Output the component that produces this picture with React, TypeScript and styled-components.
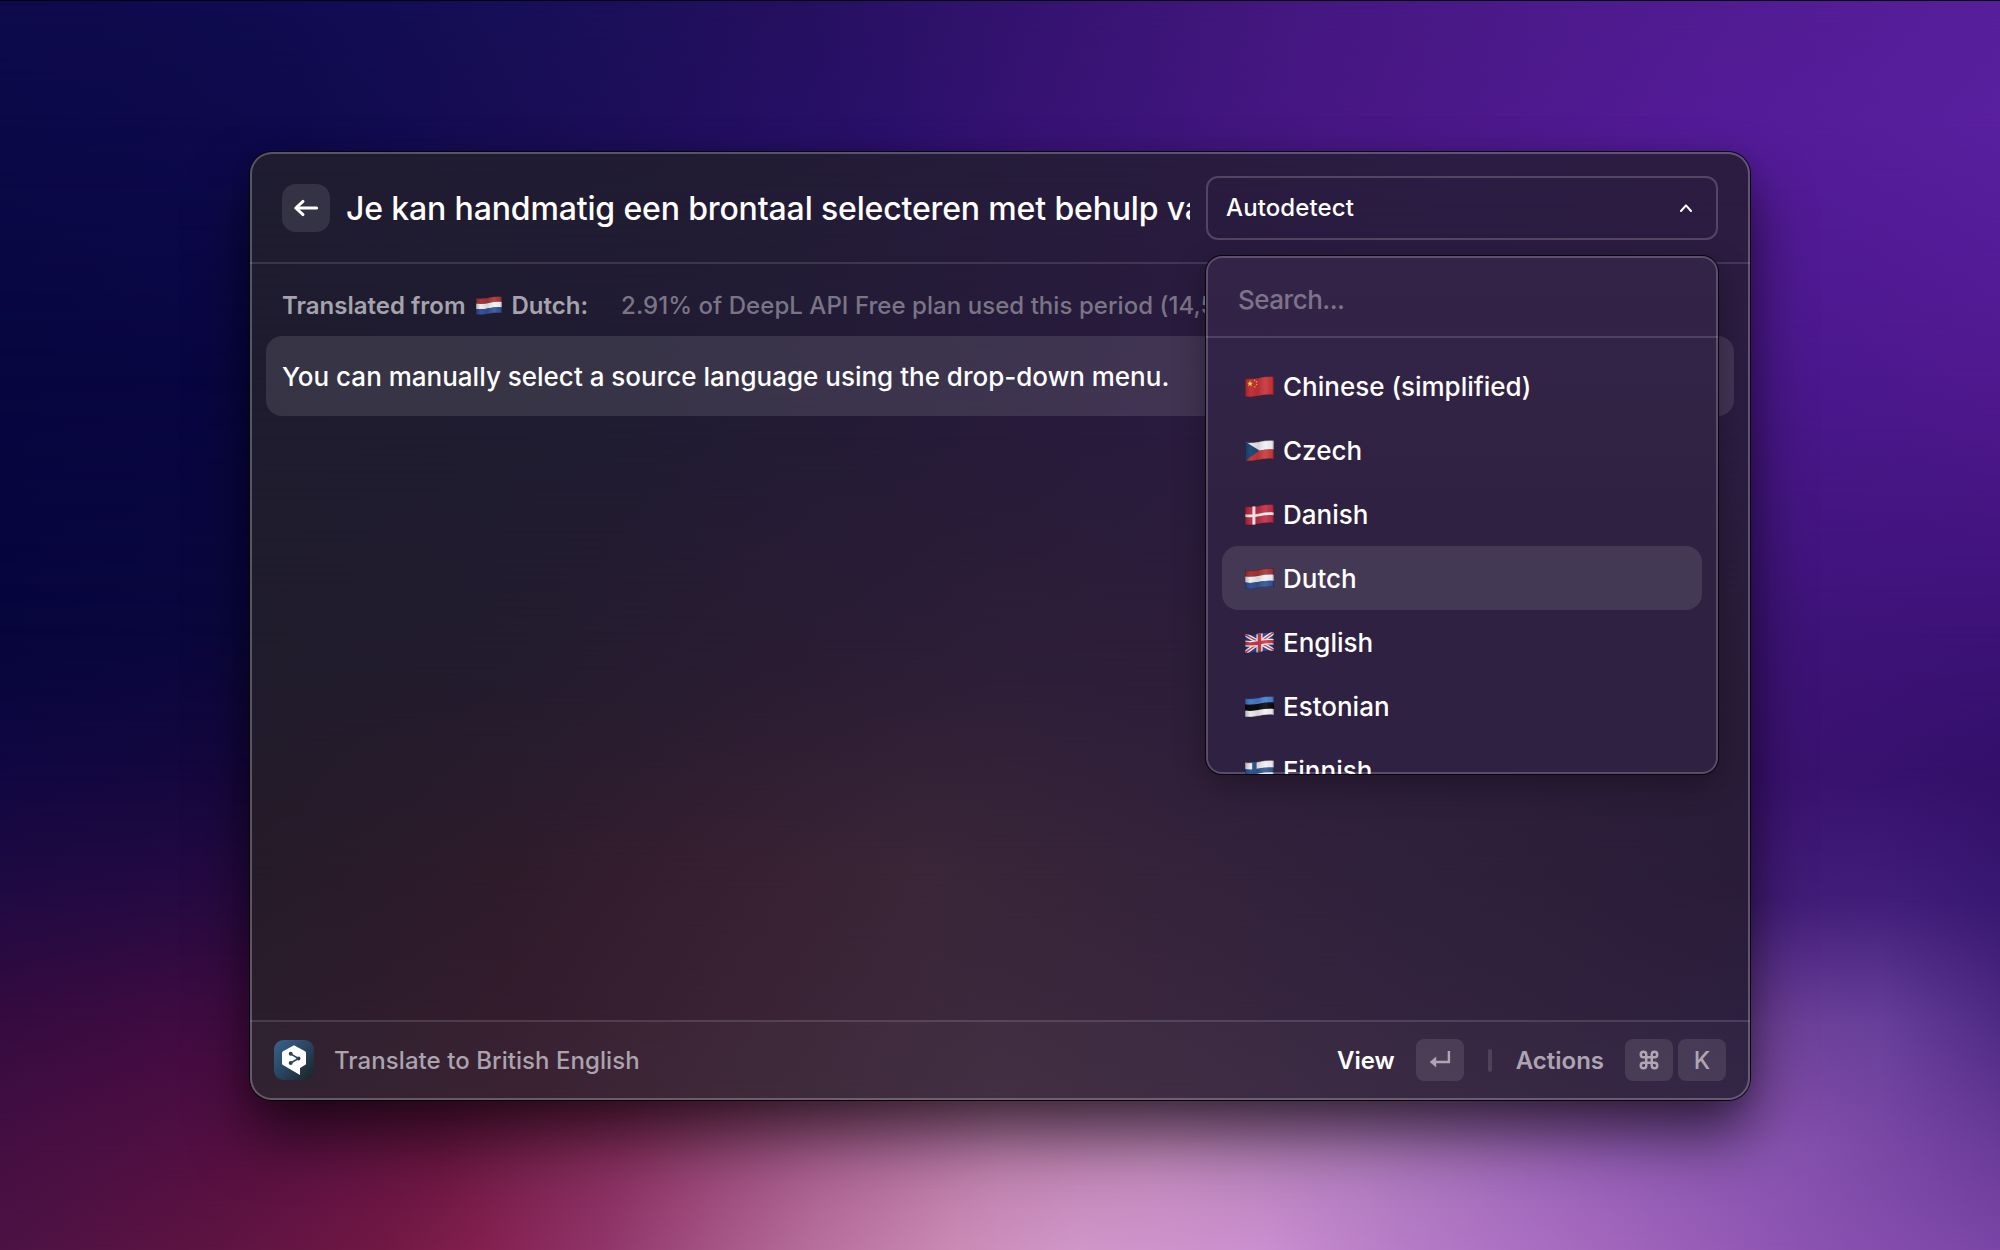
import React, { useId } from "react";
import styled, { createGlobalStyle } from "styled-components";
import { Command } from "lucide-react";

const GlobalStyle = createGlobalStyle`
  * { box-sizing: border-box; }
  html, body { margin: 0; padding: 0; background: #0a0848; }
  body {
    width: 2000px;
    height: 1250px;
    overflow: hidden;
    font-family: Inter, "Liberation Sans", sans-serif;
    -webkit-font-smoothing: antialiased;
  }
`;

/* ---------- colour meshes ---------- */

type MeshRow = { at: number; colors: [string, number][] };

const wallpaper: MeshRow[] = [
  { at: 0, colors: [["#0e0b4b", 0], ["#0e0b4f", 10], ["#180f58", 27], ["#25105f", 40], ["#33136f", 51], ["#44177f", 64], ["#4e1b8e", 80], ["#571f9b", 100]] },
  { at: 10, colors: [["#0b0947", 0], ["#0e0a4d", 14], ["#1c0e58", 30], ["#2a106a", 44], ["#371374", 52], ["#471783", 66], ["#521b96", 84], ["#591f9f", 100]] },
  { at: 30, colors: [["#070640", 0], ["#080642", 12], ["#120a50", 30], ["#2a106a", 50], ["#4a1888", 80], ["#4b188e", 92], ["#50198f", 100]] },
  { at: 50, colors: [["#06053c", 0], ["#0a073e", 12], ["#120a50", 30], ["#2a106a", 50], ["#3f1478", 84], ["#3e1379", 92], ["#3d1278", 100]] },
  { at: 62, colors: [["#110742", 0], ["#16073f", 12], ["#200a48", 30], ["#3a1060", 50], ["#3b1270", 88], ["#38116e", 94], ["#33106a", 100]] },
  { at: 72, colors: [["#210a42", 0], ["#290a42", 12], ["#4a1048", 30], ["#6a3070", 50], ["#431c78", 88], ["#411e7a", 94], ["#371872", 100]] },
  { at: 82, colors: [["#360b40", 0], ["#430c42", 12], ["#6a1848", 30], ["#a06090", 50], ["#6f4198", 88], ["#68409a", 94], ["#502b84", 100]] },
  { at: 92, colors: [["#450f42", 0], ["#560f42", 12], ["#6a1642", 22], ["#882f5e", 31], ["#a85f8e", 41], ["#be80ae", 50], ["#c088ba", 58], ["#b07cbc", 68], ["#9760b8", 80], ["#8551ad", 90], ["#6b3c9a", 100]] },
  { at: 100, colors: [["#4c1244", 0], ["#5e1442", 11], ["#701844", 19], ["#83204f", 24], ["#903468", 30], ["#a45384", 35.5], ["#b8709e", 41], ["#cb8bb7", 48], ["#d096c8", 54], ["#ca8fcf", 63], ["#b67cc7", 70], ["#a367bd", 80], ["#8c53b1", 90], ["#7a45a6", 100]] },
];

const panelTint: MeshRow[] = [
  { at: 0, colors: [["#1f1c30", 0], ["#211c34", 30], ["#271c3d", 58], ["#2c1c43", 80], ["#2d1c41", 100]] },
  { at: 30, colors: [["#1e1c2e", 0], ["#201c31", 25], ["#251b38", 45], ["#2a1b3e", 62], ["#2c1d42", 100]] },
  { at: 55, colors: [["#201c2c", 0], ["#231c2e", 18], ["#2a1c32", 34], ["#2e1e37", 50], ["#2d1d3b", 68], ["#291d39", 100]] },
  { at: 76, colors: [["#261b29", 0], ["#2e1b2b", 17], ["#361f31", 30], ["#3a2638", 45], ["#35233a", 60], ["#2f203b", 78], ["#2a1c39", 100]] },
  { at: 100, colors: [["#2d1e2e", 0], ["#361d2f", 18], ["#3a2436", 32], ["#3e2a3f", 50], ["#3b2840", 62], ["#34243f", 82], ["#2f2142", 100]] },
];

const Mesh = styled.div<{ $radius?: number }>`
  display: grid;
  width: 100%;
  height: 100%;
  overflow: hidden;
  border-radius: ${(p) => p.$radius ?? 0}px;
`;

const Wash = styled.div<{ $row: MeshRow; $from: number | null }>`
  grid-area: 1 / 1;
  background: linear-gradient(
    to right,
    ${(p) => p.$row.colors.map(([c, x]) => `${c} ${x}%`).join(", ")}
  );
  ${(p) =>
    p.$from === null
      ? ""
      : `mask-image: linear-gradient(to bottom, transparent ${p.$from}%, #000 ${p.$row.at}%);`}
`;

function GradientMesh({ rows, radius }: { rows: MeshRow[]; radius?: number }) {
  return (
    <Mesh $radius={radius}>
      {rows.map((row, i) => (
        <Wash key={row.at} $row={row} $from={i === 0 ? null : rows[i - 1].at} />
      ))}
    </Mesh>
  );
}

/* ---------- layout ---------- */

const Desktop = styled.main`
  display: grid;
  width: 2000px;
  height: 1250px;
  border-top: 1px solid #06040f;
  overflow: hidden;
`;

const Backdrop = styled.div`
  grid-area: 1 / 1;
  min-width: 0;
  min-height: 0;
`;

const Stage = styled.div`
  grid-area: 1 / 1;
  display: flex;
  justify-content: center;
  align-items: flex-start;
  padding-top: 151px;
  z-index: 1;
`;

const Window = styled.section`
  display: grid;
  width: 1500px;
  height: 948px;
  border-radius: 22px;
  box-shadow: 0 0 0 1px #07040d, 0 36px 60px rgba(0, 0, 0, 0.6), 0 4px 20px rgba(0, 0, 0, 0.14);
`;

const WindowBody = styled.div`
  grid-area: 1 / 1;
  display: flex;
  flex-direction: column;
  min-width: 0;
  border-radius: 22px;
  box-shadow: inset 0 0 0 2px rgba(255, 255, 255, 0.25);
  overflow: hidden;
  z-index: 1;
`;

const Header = styled.header`
  display: flex;
  align-items: center;
  height: 112px;
  flex: none;
  padding: 2px 32px 0;
  border-bottom: 2px solid rgba(255, 255, 255, 0.12);
`;

const BackButton = styled.button`
  display: grid;
  place-items: center;
  flex: none;
  width: 48px;
  height: 48px;
  padding: 0;
  border: 0;
  border-radius: 14px;
  background: rgba(255, 255, 255, 0.1);
`;

const Query = styled.div`
  flex: 1;
  min-width: 0;
  margin: 0 16px 0 16px;
  padding-top: 1px;
  overflow: hidden;
  white-space: nowrap;
  color: #fff;
  font-size: 32px;
  font-weight: 500;
  line-height: 48px;
  letter-spacing: -0.15px;
`;

const SelectAnchor = styled.div`
  position: relative;
  flex: none;
  width: 512px;
`;

const Select = styled.button`
  display: flex;
  align-items: center;
  justify-content: space-between;
  width: 512px;
  height: 64px;
  padding: 0 24px 0 18px;
  border: 2px solid rgba(255, 255, 255, 0.19);
  border-radius: 12px;
  background: transparent;
  color: #fff;
  font: 500 24px/32px Inter, sans-serif;
  letter-spacing: 0.12px;
`;

const Dropdown = styled.div`
  position: absolute;
  top: 80px;
  left: 0;
  z-index: 5;
  display: flex;
  flex-direction: column;
  width: 512px;
  height: 518px;
  border-radius: 16px;
  overflow: hidden;
  background: linear-gradient(180deg, #332346 0%, #322446 22%, #2e2141 48%, #2e2141 100%);
`;

const DropdownShadow = styled.div`
  position: absolute;
  top: 80px;
  left: 0;
  z-index: 4;
  width: 512px;
  height: 518px;
  border-radius: 16px;
  box-shadow: 0 0 0 1px #09050f, 0 10px 32px rgba(0, 0, 0, 0.32);
`;

const DropdownContent = styled.div`
  display: flex;
  flex-direction: column;
  height: 100%;
  border-radius: 16px;
  box-shadow: inset 0 0 0 2px rgba(255, 255, 255, 0.2);
`;

const SearchField = styled.div`
  flex: none;
  height: 82px;
  padding: 26px 32px 0;
  border-bottom: 2px solid rgba(255, 255, 255, 0.14);
  color: #7e738b;
  font-size: 26px;
  font-weight: 500;
  line-height: 36px;
  letter-spacing: -0.5px;
`;

const LanguageList = styled.ul`
  margin: 0;
  padding: 16px 16px 0;
  list-style: none;
`;

const Language = styled.li<{ $active: boolean }>`
  display: flex;
  align-items: center;
  gap: 9px;
  height: 64px;
  padding: 2px 0 0 23px;
  border-radius: 16px;
  background: ${(p) => (p.$active ? "rgba(255, 255, 255, 0.11)" : "transparent")};
  color: #fff;
  font-size: 26px;
  font-weight: 500;
  line-height: 32px;
`;

const Content = styled.div`
  flex: 1;
  min-height: 0;
  padding: 0 16px;
`;

const SectionTitle = styled.div`
  display: flex;
  align-items: center;
  height: 72px;
  padding: 12px 16px 0;
  overflow: hidden;
  white-space: nowrap;
  font-size: 24px;
  line-height: 32px;
`;

const Source = styled.span`
  display: flex;
  align-items: center;
  color: #a5a3ac;
  font-weight: 600;
`;

const FlagSlot = styled.span`
  display: flex;
  margin: 0 10px;
`;

const Usage = styled.span`
  margin-left: 33px;
  color: #7a7586;
  font-weight: 500;
  letter-spacing: 0.05px;
`;

const ResultRow = styled.div`
  display: flex;
  align-items: center;
  height: 80px;
  padding: 0 16px;
  border-radius: 16px;
  background: rgba(255, 255, 255, 0.11);
  color: #fff;
  font-size: 26px;
  font-weight: 500;
`;

const Footer = styled.footer`
  display: flex;
  align-items: center;
  flex: none;
  height: 80px;
  padding: 0 24px 2px;
  border-top: 2px solid rgba(255, 255, 255, 0.12);
  background: rgba(255, 255, 255, 0.025);
  font-size: 24px;
  line-height: 32px;
`;

const CommandTitle = styled.span`
  margin-left: 20px;
  padding-top: 1px;
  color: #aba3ae;
  font-weight: 500;
  letter-spacing: 0.06px;
`;

const Actions = styled.div`
  display: flex;
  align-items: center;
  margin-left: auto;
`;

const ActionLabel = styled.span<{ $primary?: boolean }>`
  padding-top: 1px;
  color: ${(p) => (p.$primary ? "#fff" : "#aca5b1")};
  font-weight: 600;
`;

const Key = styled.kbd<{ $gap: number }>`
  display: grid;
  place-items: center;
  width: 48px;
  height: 42px;
  margin-left: ${(p) => p.$gap}px;
  border-radius: 8px;
  background: rgba(255, 255, 255, 0.1);
  color: #aea6b3;
  font: 500 24px/34px Inter, sans-serif;
`;

const KeyLetter = styled.span`
  padding-top: 1px;
`;

const Separator = styled.span`
  width: 4px;
  height: 23px;
  margin: 0 24px;
  border-radius: 2px;
  background: rgba(255, 255, 255, 0.12);
`;

/* ---------- flags ---------- */

const edge = (y: number) => `M0 ${y + 2.2} C5 ${y + 3} 10 ${y + 2.5} 14.5 ${y + 1.5} S24 ${y} 29 ${y + 0.6}`;

const band = (y0: number, y1: number) =>
  `${edge(y0)} V${y1 + 0.6} C24 ${y1} 19 ${y1 + 0.5} 14.5 ${y1 + 1.5} S5 ${y1 + 3} 0 ${y1 + 2.2} Z`;

type FlagCode = "cn" | "cz" | "dk" | "nl" | "gb" | "ee" | "fi";

const flagArt: Record<FlagCode, React.ReactNode> = {
  cn: (
    <>
      <path d={band(0, 18.5)} fill="#c9333b" />
      <path d="M5 4.6 l.8 2.1 2.2 0 -1.7 1.4 .6 2.2 -1.9-1.2 -1.9 1.2 .6-2.2 -1.7-1.4 2.2 0z" fill="#f7d648" />
      <circle cx="9.6" cy="4.2" r=".8" fill="#e8b93f" />
      <circle cx="11.6" cy="5.9" r=".8" fill="#e8b93f" />
      <circle cx="11.6" cy="8.5" r=".8" fill="#e8b93f" />
      <circle cx="9.8" cy="10.8" r=".8" fill="#e8b93f" />
    </>
  ),
  cz: (
    <>
      <path d={band(0, 9.25)} fill="#f1f1f3" />
      <path d={band(9.25, 18.5)} fill="#cb3a3c" />
      <path d="M0 1.5 L14.5 10.6 L0 21z" fill="#234c7e" />
    </>
  ),
  dk: (
    <>
      <path d={band(0, 18.5)} fill="#c02f48" />
      <path d={band(8, 10.7)} fill="#f4f2f4" />
      <path d="M7.4 0 h3 v22 h-3z" fill="#f4f2f4" />
    </>
  ),
  nl: (
    <>
      <path d={band(0, 6.2)} fill="#ab363a" />
      <path d={band(6.2, 12.3)} fill="#f2f2f4" />
      <path d={band(12.3, 18.5)} fill="#35549a" />
    </>
  ),
  gb: (
    <>
      <path d={band(0, 18.5)} fill="#27408b" />
      <path d="M-1 2 L30 19 M-1 21.5 L30 -.5" stroke="#f1f1f4" strokeWidth="4" />
      <path d="M-1 2 L30 19 M-1 21.5 L30 -.5" stroke="#cf3a4a" strokeWidth="1.3" />
      <path d={band(6.3, 12.2)} fill="#f1f1f4" />
      <path d="M11.4 0 h6.2 v22 h-6.2z" fill="#f1f1f4" />
      <path d={band(7.6, 10.9)} fill="#cf3a4a" />
      <path d="M12.8 0 h3.4 v22 h-3.4z" fill="#cf3a4a" />
    </>
  ),
  ee: (
    <>
      <path d={band(0, 6.2)} fill="#4a7fd0" />
      <path d={band(6.2, 12.3)} fill="#0c0c0e" />
      <path d={band(12.3, 18.5)} fill="#f1f1f3" />
    </>
  ),
  fi: (
    <>
      <path d={band(0, 18.5)} fill="#f1f1f4" />
      <path d={band(6.8, 11.8)} fill="#335a94" />
      <path d="M7.2 0 h4.4 v22 h-4.4z" fill="#335a94" />
    </>
  ),
};

function Flag({ code, width = 29 }: { code: FlagCode; width?: number }) {
  const id = useId().replace(/[^a-zA-Z0-9]/g, "");
  return (
    <svg width={width} height={(width * 22) / 29} viewBox="0 0 29 22" fill="none">
      <defs>
        <clipPath id={`c${id}`}>
          <path d={band(0, 18.5)} />
        </clipPath>
        <linearGradient id={`g${id}`} x1="0" x2="1" y1="0" y2="0">
          <stop offset="0" stopColor="#000" stopOpacity=".26" />
          <stop offset=".18" stopColor="#000" stopOpacity=".02" />
          <stop offset=".45" stopColor="#000" stopOpacity=".12" />
          <stop offset=".72" stopColor="#fff" stopOpacity=".08" />
          <stop offset=".92" stopColor="#000" stopOpacity=".04" />
          <stop offset="1" stopColor="#000" stopOpacity=".3" />
        </linearGradient>
      </defs>
      <g clipPath={`url(#c${id})`}>
        {flagArt[code]}
        <path d={band(0, 18.5)} fill={`url(#g${id})`} />
        <path d={band(0, 18.5)} stroke="#000" strokeOpacity=".28" strokeWidth="1.4" />
      </g>
    </svg>
  );
}

/* ---------- icons ---------- */

const ArrowLeftIcon = () => (
  <svg width="48" height="48" viewBox="0 0 48 48" fill="none" stroke="#fff" strokeWidth="3" strokeLinecap="round" strokeLinejoin="round">
    <path d="M13.8 24 H34.6 M21 17.4 L13.8 24 L21 30.6" />
  </svg>
);

const ChevronUpIcon = () => (
  <svg width="12" height="8" viewBox="0 0 12 8" fill="none" stroke="#fff" strokeWidth="2" strokeLinecap="round" strokeLinejoin="round">
    <path d="M1 7 L6 1.4 L11 7" />
  </svg>
);

const ReturnIcon = () => (
  <svg width="48" height="42" viewBox="0 0 48 42" fill="none">
    <path d="M32.9 12 V23 H19" stroke="#aea6b3" strokeWidth="2.4" />
    <path d="M13.8 23 L20.2 17.6 V28.4z" fill="#aea6b3" />
  </svg>
);

const DeepLIcon = () => (
  <svg width="40" height="40" viewBox="0 0 40 40">
    <defs>
      <linearGradient id="tile" x1="0" y1="0" x2="1" y2="1">
        <stop offset="0" stopColor="#386390" />
        <stop offset=".5" stopColor="#294560" />
        <stop offset="1" stopColor="#1c2024" />
      </linearGradient>
    </defs>
    <rect width="40" height="40" rx="9.5" fill="url(#tile)" />
    <path d="M20 5.3 L31 11.3 Q32 11.9 32 13 V23.4 Q32 24.5 31 25.1 L26 28.1 V35 L9 25.1 Q8 24.5 8 23.4 V13 Q8 11.9 9 11.3z" fill="#fff" />
    <g stroke="#2a4359" strokeWidth="1.5">
      <path d="M16.6 13.8 L24.5 18.5 L16.6 23" fill="none" />
    </g>
    <circle cx="16.7" cy="13.8" r="2" fill="#2a4359" />
    <circle cx="24.5" cy="18.6" r="2" fill="#2a4359" />
    <circle cx="16.7" cy="23" r="2" fill="#2a4359" />
  </svg>
);

/* ---------- page ---------- */

const languages: { code: FlagCode; name: string }[] = [
  { code: "cn", name: "Chinese (simplified)" },
  { code: "cz", name: "Czech" },
  { code: "dk", name: "Danish" },
  { code: "nl", name: "Dutch" },
  { code: "gb", name: "English" },
  { code: "ee", name: "Estonian" },
  { code: "fi", name: "Finnish" },
];

export default function App() {
  return (
    <>
      <GlobalStyle />
      <Desktop>
        <Backdrop>
          <GradientMesh rows={wallpaper} />
        </Backdrop>
        <Stage>
          <Window>
            <Backdrop>
              <GradientMesh rows={panelTint} radius={22} />
            </Backdrop>
            <WindowBody>
              <Header>
                <BackButton aria-label="Back">
                  <ArrowLeftIcon />
                </BackButton>
                <Query>Je kan handmatig een brontaal selecteren met behulp van</Query>
                <SelectAnchor>
                  <Select>
                    Autodetect
                    <ChevronUpIcon />
                  </Select>
                  <DropdownShadow />
                  <Dropdown>
                    <DropdownContent>
                      <SearchField>Search...</SearchField>
                      <LanguageList>
                        {languages.map((l) => (
                          <Language key={l.code} $active={l.code === "nl"}>
                            <Flag code={l.code} />
                            {l.name}
                          </Language>
                        ))}
                      </LanguageList>
                    </DropdownContent>
                  </Dropdown>
                </SelectAnchor>
              </Header>
              <Content>
                <SectionTitle>
                  <Source>
                    Translated from
                    <FlagSlot>
                      <Flag code="nl" width={26} />
                    </FlagSlot>
                    Dutch:
                  </Source>
                  <Usage>2.91% of DeepL API Free plan used this period (14,5</Usage>
                </SectionTitle>
                <ResultRow>You can manually select a source language using the drop-down menu.</ResultRow>
              </Content>
              <Footer>
                <DeepLIcon />
                <CommandTitle>Translate to British English</CommandTitle>
                <Actions>
                  <ActionLabel $primary>View</ActionLabel>
                  <Key $gap={21}>
                    <ReturnIcon />
                  </Key>
                  <Separator />
                  <ActionLabel>Actions</ActionLabel>
                  <Key $gap={21}>
                    <Command size={22} strokeWidth={2.7} />
                  </Key>
                  <Key $gap={5}>
                    <KeyLetter>K</KeyLetter>
                  </Key>
                </Actions>
              </Footer>
            </WindowBody>
          </Window>
        </Stage>
      </Desktop>
    </>
  );
}
